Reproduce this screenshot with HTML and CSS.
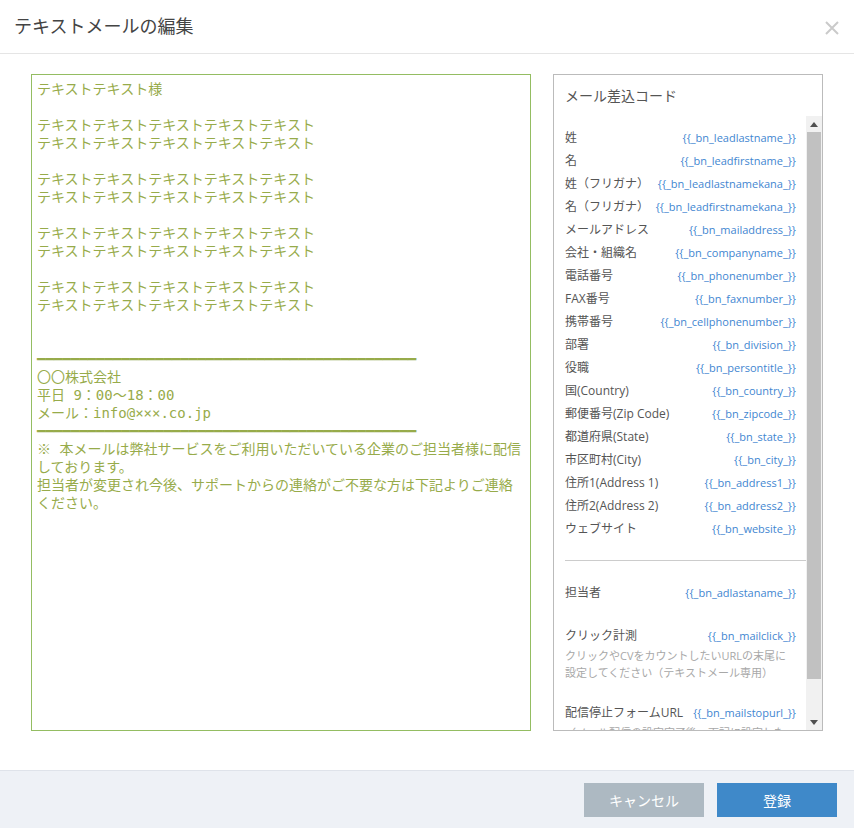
FILE: index.html
```html
<!DOCTYPE html>
<html>
<head>
	<meta charset="utf-8">
	<title>テキストメールの編集</title>
<link rel="stylesheet" href="styles.css">
</head>

<body>

<div id="dlg">

<div id="dlg_head">
<div id="dlg_title">テキストメールの編集</div>
<svg id="btn_close" width="14" height="14" viewBox="0 0 14 14"><path d="M1 1 L13 13 M13 1 L1 13" stroke="#cacaca" stroke-width="2" fill="none"/></svg>
</div>

<div id="dlg_body">
<textarea id="txt_mail" spellcheck="false">テキストテキスト様

テキストテキストテキストテキストテキスト
テキストテキストテキストテキストテキスト

テキストテキストテキストテキストテキスト
テキストテキストテキストテキストテキスト

テキストテキストテキストテキストテキスト
テキストテキストテキストテキストテキスト

テキストテキストテキストテキストテキスト
テキストテキストテキストテキストテキスト


━━━━━━━━━━━━━━━━━━━━━━━━━━━━━━━━━━━━━━━━━━━━━
〇〇株式会社
平日 9：00～18：00
メール：info@×××.co.jp
━━━━━━━━━━━━━━━━━━━━━━━━━━━━━━━━━━━━━━━━━━━━━
※ 本メールは弊社サービスをご利用いただいている企業のご担当者様に配信しております。
担当者が変更され今後、サポートからの連絡がご不要な方は下記よりご連絡ください。</textarea>

<div id="box_code">
<div id="box_code_title">メール差込コード</div>
<div id="lst_wrap">
<div id="lst_code">
<div class="row"><span>姓</span><span class="code">{{_bn_leadlastname_}}</span></div>
<div class="row"><span>名</span><span class="code">{{_bn_leadfirstname_}}</span></div>
<div class="row"><span>姓（フリガナ）</span><span class="code">{{_bn_leadlastnamekana_}}</span></div>
<div class="row"><span>名（フリガナ）</span><span class="code">{{_bn_leadfirstnamekana_}}</span></div>
<div class="row"><span>メールアドレス</span><span class="code">{{_bn_mailaddress_}}</span></div>
<div class="row"><span>会社・組織名</span><span class="code">{{_bn_companyname_}}</span></div>
<div class="row"><span>電話番号</span><span class="code">{{_bn_phonenumber_}}</span></div>
<div class="row"><span>FAX番号</span><span class="code">{{_bn_faxnumber_}}</span></div>
<div class="row"><span>携帯番号</span><span class="code">{{_bn_cellphonenumber_}}</span></div>
<div class="row"><span>部署</span><span class="code">{{_bn_division_}}</span></div>
<div class="row"><span>役職</span><span class="code">{{_bn_persontitle_}}</span></div>
<div class="row"><span>国(Country)</span><span class="code">{{_bn_country_}}</span></div>
<div class="row"><span>郵便番号(Zip Code)</span><span class="code">{{_bn_zipcode_}}</span></div>
<div class="row"><span>都道府県(State)</span><span class="code">{{_bn_state_}}</span></div>
<div class="row"><span>市区町村(City)</span><span class="code">{{_bn_city_}}</span></div>
<div class="row"><span>住所1(Address 1)</span><span class="code">{{_bn_address1_}}</span></div>
<div class="row"><span>住所2(Address 2)</span><span class="code">{{_bn_address2_}}</span></div>
<div class="row"><span>ウェブサイト</span><span class="code">{{_bn_website_}}</span></div>

<div class="sep"></div>

<div class="grp">
<div class="row"><span>担当者</span><span class="code">{{_bn_adlastaname_}}</span></div>
</div>

<div class="grp">
<div class="row"><span>クリック計測</span><span class="code">{{_bn_mailclick_}}</span></div>
<div class="note">クリックやCVをカウントしたいURLの末尾に<br>設定してください（テキストメール専用）</div>
</div>

<div class="grp">
<div class="row"><span>配信停止フォームURL</span><span class="code">{{_bn_mailstopurl_}}</span></div>
<div class="note">（メール配信の設定完了後、下記に設定した<br>［配信停止フォーム］のURLが挿入されます）</div>
</div>
</div>

<div id="sbar">
<div class="sbar_btn"><svg width="8" height="5" viewBox="0 0 8 5"><path d="M4 0 L8 5 L0 5 Z" fill="#505050"/></svg></div>
<div class="sbar_track"><div class="sbar_thumb"></div></div>
<div class="sbar_btn"><svg width="8" height="5" viewBox="0 0 8 5"><path d="M0 0 L8 0 L4 5 Z" fill="#505050"/></svg></div>
</div>
</div>
</div>
</div>

<div id="dlg_foot">
<div class="btn btn_cancel">キャンセル</div>
<div class="btn btn_ok">登録</div>
</div>

</div>

</body>
</html>
```

FILE: styles.css
```css
body {
	margin: 0;
	background-color: #fff;
	font-family: "Open Sans", "Noto Sans CJK JP", sans-serif;
}

#dlg {
	display: flex;
	flex-direction: column;
	height: 828px;
}

#dlg_head {
	display: flex;
	justify-content: space-between;
	align-items: flex-start;
	height: 54px;
	padding: 13px 15px 0 14px;
	box-sizing: border-box;
	border-bottom: #e5e5e5 1px solid;
}

#dlg_title {
	font-family: "Noto Sans CJK JP", sans-serif;
	font-size: 18px;
	line-height: 24px;
	color: #444;
}

#btn_close {
	margin-top: 8px;
}

#dlg_body {
	flex: 1;
	display: flex;
	gap: 22px;
	padding: 20px 31px 0;
}

#txt_mail {
	width: 500px;
	height: 657px;
	box-sizing: border-box;
	margin: 0;
	padding: 5px;
	resize: none;
	outline: none;

	border: #94bd62 1px solid;
	border-radius: 0;

	font-family: "DejaVu Sans Mono", "Noto Sans CJK JP", monospace;
	font-size: 14px;
	line-height: 18px;
	color: #97ab4a;
}

#box_code {
	width: 270px;
	height: 657px;
	box-sizing: border-box;
	border: #bbb 1px solid;
	display: flex;
	flex-direction: column;
}

#box_code_title {
	padding: 10px 11px 11px;
	font-family: "Noto Sans CJK JP", sans-serif;
	font-size: 14px;
	line-height: 20px;
	color: #555;
}

#lst_wrap {
	flex: 1;
	display: flex;
	min-height: 0;
}

#lst_code {
	flex: 1;
	overflow: hidden;
	padding: 10px 0 0 11px;
}

#lst_code .row {
	display: flex;
	justify-content: space-between;
	align-items: baseline;
	height: 23px;
	line-height: 23px;
	padding-right: 10px;

	font-size: 12px;
	color: #555;
	white-space: nowrap;
}

#lst_code .code {
	font-size: 11px;
	color: #3f86d1;
}

#lst_code .sep {
	margin-top: 20px;
	border-top: #ccc 1px solid;
}

#lst_code .grp {
	margin-top: 20px;
}

#lst_code .note {
	padding-right: 10px;
	font-size: 11px;
	line-height: 17px;
	color: #a8a8a8;
	white-space: nowrap;
}

#sbar {
	width: 16px;
	display: flex;
	flex-direction: column;
	background-color: #f1f1f1;
}

.sbar_btn {
	height: 16px;
	display: flex;
	align-items: center;
	justify-content: center;
}

.sbar_track {
	flex: 1;
	padding: 0 1px;
}

.sbar_thumb {
	height: 547px;
	background-color: #c1c1c1;
}

#dlg_foot {
	display: flex;
	justify-content: flex-end;
	gap: 13px;
	height: 58px;
	box-sizing: border-box;
	padding: 12px 17px 0;

	background-color: #eef1f6;
	border-top: #dfe3ea 1px solid;
}

.btn {
	width: 120px;
	height: 34px;
	line-height: 34px;
	text-align: center;

	font-family: "Noto Sans CJK JP", sans-serif;
	font-size: 14px;
	color: #fff;
}

.btn_cancel {
	background-color: #adb9c2;
}

.btn_ok {
	background-color: #3f89c9;
}
```
